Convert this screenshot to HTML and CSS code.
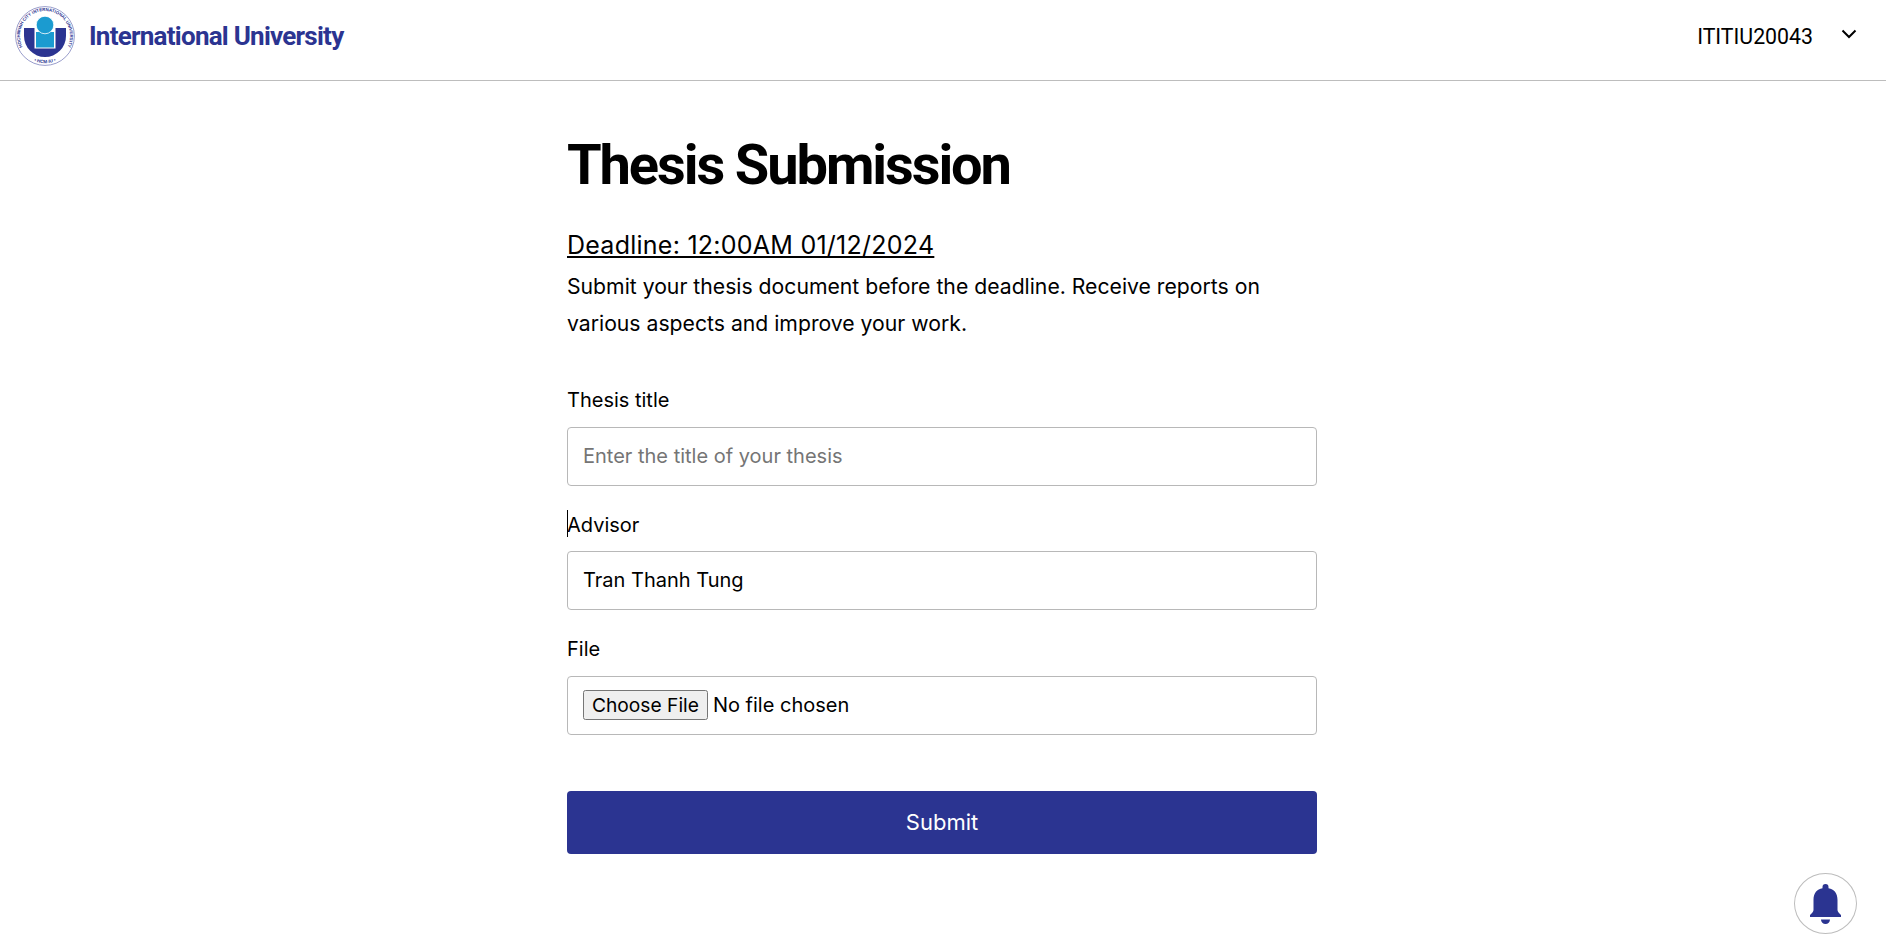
FILE: index.html
```html
<!DOCTYPE html>
<html lang="en">
<head>
  <meta charset="UTF-8" />
  <meta name="viewport" content="width=device-width, initial-scale=1.0" />
  <title>Thesis Submission</title>
  <link rel="stylesheet" href="styles.css">
</head>
<body>
  <header class="topbar">
    <div class="brand">
      <svg class="logo" viewBox="0 0 60 60" width="60" height="60" aria-hidden="true">
        <defs>
          <path id="ring-top" d="M13 48.3 A25 25 0 1 1 47 48.3" />
          <path id="ring-bottom" d="M11 49.5 A27.2 27.2 0 0 0 49 49.5" />
        </defs>
        <circle cx="30" cy="30" r="29.4" fill="#fff" stroke="#6d73b5" stroke-width="0.7" />
        <path d="M9 22 H51 V30 A21 21 0 0 1 9 30 Z" fill="#2b3491" />
        <rect x="19.5" y="22" width="21" height="20.5" fill="#fff" />
        <rect x="21" y="26" width="18" height="15.5" fill="#1b9bd0" />
        <circle cx="30" cy="19" r="8.8" fill="#1b9bd0" stroke="#fff" stroke-width="0.8" />
        <text class="logo-ring"><textPath href="#ring-top" startOffset="50%" text-anchor="middle">HOCHIMINH CITY INTERNATIONAL UNIVERSITY</textPath></text>
        <text class="logo-ring logo-ring-low"><textPath href="#ring-bottom" startOffset="50%" text-anchor="middle">• HCM-IU •</textPath></text>
      </svg>
      <span class="brand-name">International University</span>
    </div>
    <div class="user">
      <span>ITITIU20043</span>
      <svg class="chevron" viewBox="0 0 16 16" width="16" height="16" aria-hidden="true">
        <path d="M1.5 4.5 L8 11 L14.5 4.5" fill="none" stroke="#000" stroke-width="2" />
      </svg>
    </div>
  </header>

  <main class="content">
    <h1>Thesis Submission</h1>
    <p class="deadline">Deadline: 12:00AM 01/12/2024</p>
    <p class="intro">Submit your thesis document before the deadline. Receive reports on various aspects and improve your work.</p>

    <form class="form">
      <label for="title">Thesis title</label>
      <input class="field" type="text" id="title" placeholder="Enter the title of your thesis">

      <div class="label-row">
        <span class="caret"></span>
        <label for="advisor">Advisor</label>
      </div>
      <input class="field" type="text" id="advisor" value="Tran Thanh Tung">

      <label for="file">File</label>
      <input class="field file" type="file" id="file">

      <button class="submit" type="button">Submit</button>
    </form>
  </main>

  <button class="bell" type="button" aria-label="Notifications">
    <svg viewBox="0 0 31 40" width="31" height="40" aria-hidden="true">
      <path d="M15.5 0 a3 3 0 0 1 3 3 v1.2 C24 5 27.5 9 27.5 16 V26 Q27.5 28 31 31 V33 H0 V31 Q3.5 28 3.5 26 V16 C3.5 9 7 5 12.5 4.2 V3 a3 3 0 0 1 3 -3 Z" fill="#2b3491" />
      <path d="M11 35.5 H20 A4.5 4.5 0 0 1 11 35.5 Z" fill="#2b3491" />
    </svg>
  </button>
</body>
</html>
```

FILE: styles.css
```css
* {
  box-sizing: border-box;
}
body {
  margin: 0;
  font-family: Inter, "Liberation Sans", sans-serif;
  color: #000;
  background-color: #fff;
}
.topbar {
  display: flex;
  justify-content: space-between;
  align-items: center;
  height: 81px;
  padding: 0 29px 8px 15px;
  border-bottom: 1px solid #bdbdbd;
}
.brand {
  display: flex;
  align-items: center;
  gap: 14px;
}
.logo {
  display: block;
}
.logo-ring {
  font-family: "Liberation Sans", sans-serif;
  font-size: 4.4px;
  font-weight: 700;
  fill: #2b3491;
}
.logo-ring-low {
  font-size: 4.6px;
}
.brand-name {
  font-family: Roboto, sans-serif;
  font-size: 26px;
  font-weight: 700;
  color: #2b3491;
  letter-spacing: -0.75px;
}
.user {
  display: flex;
  align-items: center;
  gap: 28px;
  font-family: Roboto, sans-serif;
  font-size: 21.3px;
}
.chevron {
  margin-top: -4px;
}
.content {
  width: 752px;
  margin: 0 auto;
  padding: 52px 2px 0 0;
}
h1 {
  margin: 0 0 30px;
  font-family: Roboto, sans-serif;
  font-size: 56px;
  line-height: 64px;
  font-weight: 700;
  letter-spacing: -2.1px;
}
.deadline {
  margin: 0 0 4px;
  font-size: 25px;
  line-height: 37px;
  font-weight: 400;
  letter-spacing: 0.25px;
  text-decoration: underline;
}
.intro {
  margin: 0 0 43px;
  font-size: 21.2px;
  line-height: 37px;
}
.form {
  display: flex;
  flex-direction: column;
}
label {
  display: block;
  font-size: 20px;
  line-height: 30px;
  margin-bottom: 11.5px;
}
.label-row {
  position: relative;
}
.caret {
  position: absolute;
  left: 0;
  top: 0;
  width: 1px;
  height: 27px;
  background-color: #000;
}
.field {
  width: 100%;
  height: 59px;
  padding: 0 15px 1px;
  margin-bottom: 24px;
  font-family: inherit;
  font-size: 20px;
  color: #000;
  background-color: #fff;
  border: 1px solid #b8b8b8;
  border-radius: 4px;
}
.field::placeholder {
  color: #757575;
}
.file {
  padding-top: 13px;
}
.file::file-selector-button {
  height: 30px;
  margin-right: 5px;
  padding: 0 7px;
  font-family: inherit;
  font-size: 19.2px;
}
.submit {
  height: 63px;
  margin-top: 32px;
  font-family: inherit;
  font-size: 22px;
  color: #fff;
  background-color: #2b3491;
  border: none;
  border-radius: 4px;
}
.bell {
  position: fixed;
  right: 29px;
  bottom: 7px;
  display: flex;
  align-items: center;
  justify-content: center;
  width: 63px;
  height: 61px;
  padding: 0;
  background-color: #fff;
  border: 1px solid #bdbdbd;
  border-radius: 50%;
}
```
